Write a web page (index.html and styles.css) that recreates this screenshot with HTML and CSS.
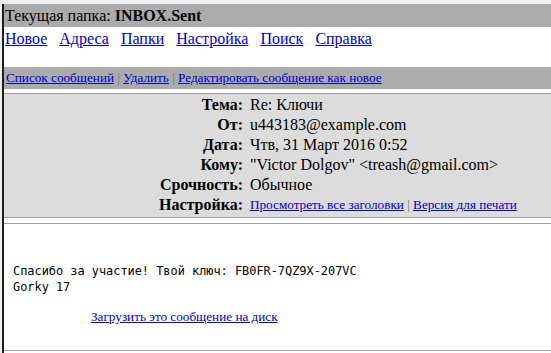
FILE: index.html
```html
<!DOCTYPE html>
<html lang="ru">
<head>
    <meta charset="UTF-8">
    <title>INBOX.Sent</title>
    <link rel="stylesheet" href="styles.css">
</head>
<body>
<div class="frame">
    <div class="folder">Текущая папка: <b>INBOX.Sent</b></div>
    <div class="nav">
        <a href="#">Новое</a>&nbsp;&nbsp;
        <a href="#">Адреса</a>&nbsp;&nbsp;
        <a href="#">Папки</a>&nbsp;&nbsp;
        <a href="#">Настройка</a>&nbsp;&nbsp;
        <a href="#">Поиск</a>&nbsp;&nbsp;
        <a href="#">Справка</a>
    </div>
    <div class="actions">
        <a href="#">Список сообщений</a> <span class="sep">|</span>
        <a href="#">Удалить</a> <span class="sep">|</span>
        <a href="#">Редактировать сообщение как новое</a>
    </div>

    <div class="headers">
        <div class="label">Тема:</div><div class="value">Re: Ключи</div>
        <div class="label">От:</div><div class="value">u443183@example.com</div>
        <div class="label">Дата:</div><div class="value">Чтв, 31 Март 2016 0:52</div>
        <div class="label">Кому:</div><div class="value">"Victor Dolgov" &lt;treash@gmail.com&gt;</div>
        <div class="label">Срочность:</div><div class="value">Обычное</div>
        <div class="label">Настройка:</div>
        <div class="value small">
            <a href="#">Просмотреть все заголовки</a> <span class="sep">|</span>
            <a href="#">Версия для печати</a>
        </div>
    </div>

    <div class="message">
        <pre class="text">Спасибо за участие! Твой ключ: FB0FR-7QZ9X-207VC
Gorky 17</pre>
        <div class="download"><a href="#">Загрузить это сообщение на диск</a></div>
    </div>
</div>
</body>
</html>
```

FILE: styles.css
```css
body {
    margin: 0;
    background-color: #eeeeee;
    font-family: "Liberation Serif", "Times New Roman", serif;
    font-size: 16px;
    color: #000;
}
a {
    color: #0000cc;
}
.frame {
    margin: 4px 0 0 2px;
    border-left: 2px solid #1c1c1c;
    background-color: #fff;
    height: 349px;
}
.folder {
    background-color: #ababab;
    height: 23px;
    line-height: 23px;
    padding-left: 1px;
}
.nav {
    height: 40px;
    padding: 1px 0 0 1px;
    box-sizing: border-box;
    line-height: 22px;
}
.actions {
    background-color: #ababab;
    height: 22px;
    line-height: 21px;
    font-size: 13.2px;
    padding-left: 2px;
}
.sep {
    color: #777;
}
.headers {
    margin-top: 4px;
    border-top: 1px solid #a0a0a0;
    border-bottom: 1px solid #a0a0a0;
    background-color: #dcdcdc;
    display: grid;
    grid-template-columns: 239px 1fr;
    column-gap: 7px;
    padding: 1px 0 2px;
}
.label {
    font-weight: bold;
    text-align: right;
    line-height: 20px;
}
.value {
    line-height: 20px;
}
.value.small {
    font-size: 13.2px;
}
.message {
    margin-top: 5px;
    border-top: 1px solid #a0a0a0;
    border-bottom: 1px solid #a0a0a0;
    height: 126px;
}
.text {
    margin: 39px 0 0 9px;
    font-family: "DejaVu Sans Mono", "Lucida Console", monospace;
    font-size: 11.9px;
    line-height: 16px;
}
.download {
    margin-top: 14px;
    padding-left: 87px;
    font-size: 13.2px;
    line-height: 16px;
}
```
